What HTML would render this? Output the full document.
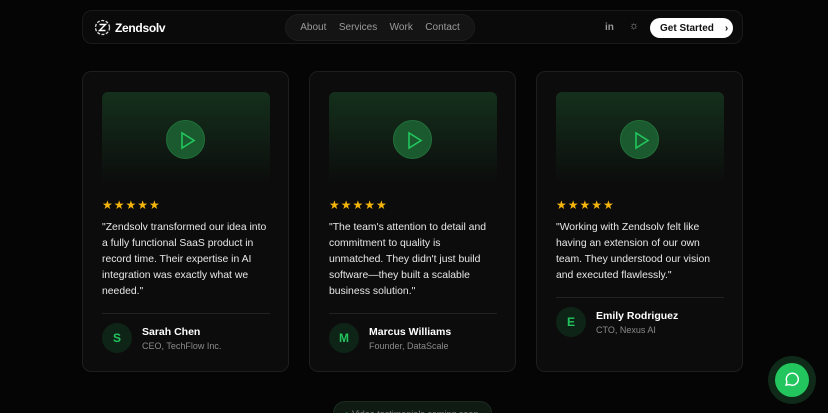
<!DOCTYPE html><html><head><style>
*{margin:0;padding:0;box-sizing:border-box}
html,body{width:828px;height:413px;overflow:hidden}
body{background:#050505;font-family:"Liberation Sans",sans-serif;position:relative;color:#e5e5e5}
.nav{position:absolute;left:82px;top:10px;width:661px;height:34px;border:1px solid #1a1a1a;border-radius:10px;background:#0a0a0a}
.logo{position:absolute;left:11px;top:8px;display:flex;align-items:center;gap:4px;font-weight:bold;font-size:12px;color:#fff;letter-spacing:-0.3px}
.pill{position:absolute;left:202px;top:3px;width:190px;height:27px;border-radius:14px;background:#141414;border:1px solid #1d1d1d;display:flex;justify-content:space-around;align-items:center;padding:0 8px;font-size:10px;color:#9a9a9a}
.gs{position:absolute;left:567px;top:7px;width:83px;height:20px;background:#fff;border-radius:10px;color:#111;font-size:10px;font-weight:bold;display:flex;align-items:center;padding-left:10px}
.card{position:absolute;top:71px;width:207px;height:301px;border:1px solid #1e1e1e;border-radius:9px;background:#0c0c0c}
.vid{position:absolute;left:19px;top:20px;width:168px;height:92px;border-radius:6px;background:linear-gradient(#14301c,#0c0c0c)}
.play{position:absolute;left:64px;top:28px;width:39px;height:39px;border-radius:50%;background:#1a5a2e;border:1px solid #22703a}
.stars{position:absolute;left:19px;top:126px;color:#f5b50a;font-size:12px;letter-spacing:1px}
.q{position:absolute;left:19px;top:148px;width:180px;font-size:10.4px;line-height:16px;color:#e8e8e8;white-space:nowrap}
.hr{position:absolute;left:19px;width:168px;border-top:1px solid #222}
.av{position:absolute;left:19px;width:30px;height:30px;border-radius:50%;background:#0e2416;color:#22c55e;font-weight:bold;font-size:12px;display:flex;align-items:center;justify-content:center}
.nm{position:absolute;left:59px;font-size:10.5px;font-weight:bold;color:#fff}
.rl{position:absolute;left:59px;font-size:9px;color:#8a8a8a}
</style></head><body>
<div class="nav">
<div class="logo"><svg width="17" height="17" viewBox="0 0 17 17"><circle cx="8.5" cy="8.5" r="7" fill="none" stroke="#ddd" stroke-width="1.3" stroke-dasharray="3 1.5"/><path d="M5.5 5.5h6l-6 6h6" fill="none" stroke="#fff" stroke-width="1.4"/></svg>Zendsolv</div>
<div class="pill"><span>About</span><span>Services</span><span>Work</span><span>Contact</span></div>
<div style="position:absolute;left:522px;top:11px;font-size:10px;color:#999;font-weight:bold">in</div>
<div style="position:absolute;left:546px;top:9px;font-size:11px;color:#999">☼</div>
<div class="gs">Get Started <span style="margin-left:11px">›</span></div>
</div>
<div class="card" style="left:82px"><div class="vid"><div class="play"><svg width="39" height="39"><path d="M15 12v15l12-7.5z" fill="none" stroke="#22c55e" stroke-width="1.6"/></svg></div></div>
<div class="stars">★★★★★</div>
<div class="q">"Zendsolv transformed our idea into<br>a fully functional SaaS product in<br>record time. Their expertise in AI<br>integration was exactly what we<br>needed."</div>
<div class="hr" style="top:241px"></div><div class="av" style="top:251px">S</div><div class="nm" style="top:254px">Sarah Chen</div><div class="rl" style="top:269px">CEO, TechFlow Inc.</div></div>
<div class="card" style="left:309px"><div class="vid"><div class="play"><svg width="39" height="39"><path d="M15 12v15l12-7.5z" fill="none" stroke="#22c55e" stroke-width="1.6"/></svg></div></div>
<div class="stars">★★★★★</div>
<div class="q">"The team's attention to detail and<br>commitment to quality is<br>unmatched. They didn't just build<br>software—they built a scalable<br>business solution."</div>
<div class="hr" style="top:241px"></div><div class="av" style="top:251px">M</div><div class="nm" style="top:254px">Marcus Williams</div><div class="rl" style="top:269px">Founder, DataScale</div></div>
<div class="card" style="left:536px"><div class="vid"><div class="play"><svg width="39" height="39"><path d="M15 12v15l12-7.5z" fill="none" stroke="#22c55e" stroke-width="1.6"/></svg></div></div>
<div class="stars">★★★★★</div>
<div class="q">"Working with Zendsolv felt like<br>having an extension of our own<br>team. They understood our vision<br>and executed flawlessly."</div>
<div class="hr" style="top:225px"></div><div class="av" style="top:235px">E</div><div class="nm" style="top:238px">Emily Rodriguez</div><div class="rl" style="top:253px">CTO, Nexus AI</div></div>
<div style="position:absolute;left:333px;top:401px;width:159px;height:24px;border-radius:12px;background:#0e1a12;border:1px solid #1c2a20;font-size:9px;color:#888;padding:7px 0 0 10px"><span style="color:#22c55e">●</span> Video testimonials coming soon</div>
<div style="position:absolute;left:768px;top:356px;width:48px;height:48px;border-radius:50%;background:#0f2a18"></div>
<div style="position:absolute;left:775px;top:363px;width:34px;height:34px;border-radius:50%;background:#22c55e"><svg width="34" height="34"><path d="M11 22l1-3a6 6 0 1 1 2.5 2.5z" fill="none" stroke="#fff" stroke-width="1.4"/></svg></div>
</body></html>
